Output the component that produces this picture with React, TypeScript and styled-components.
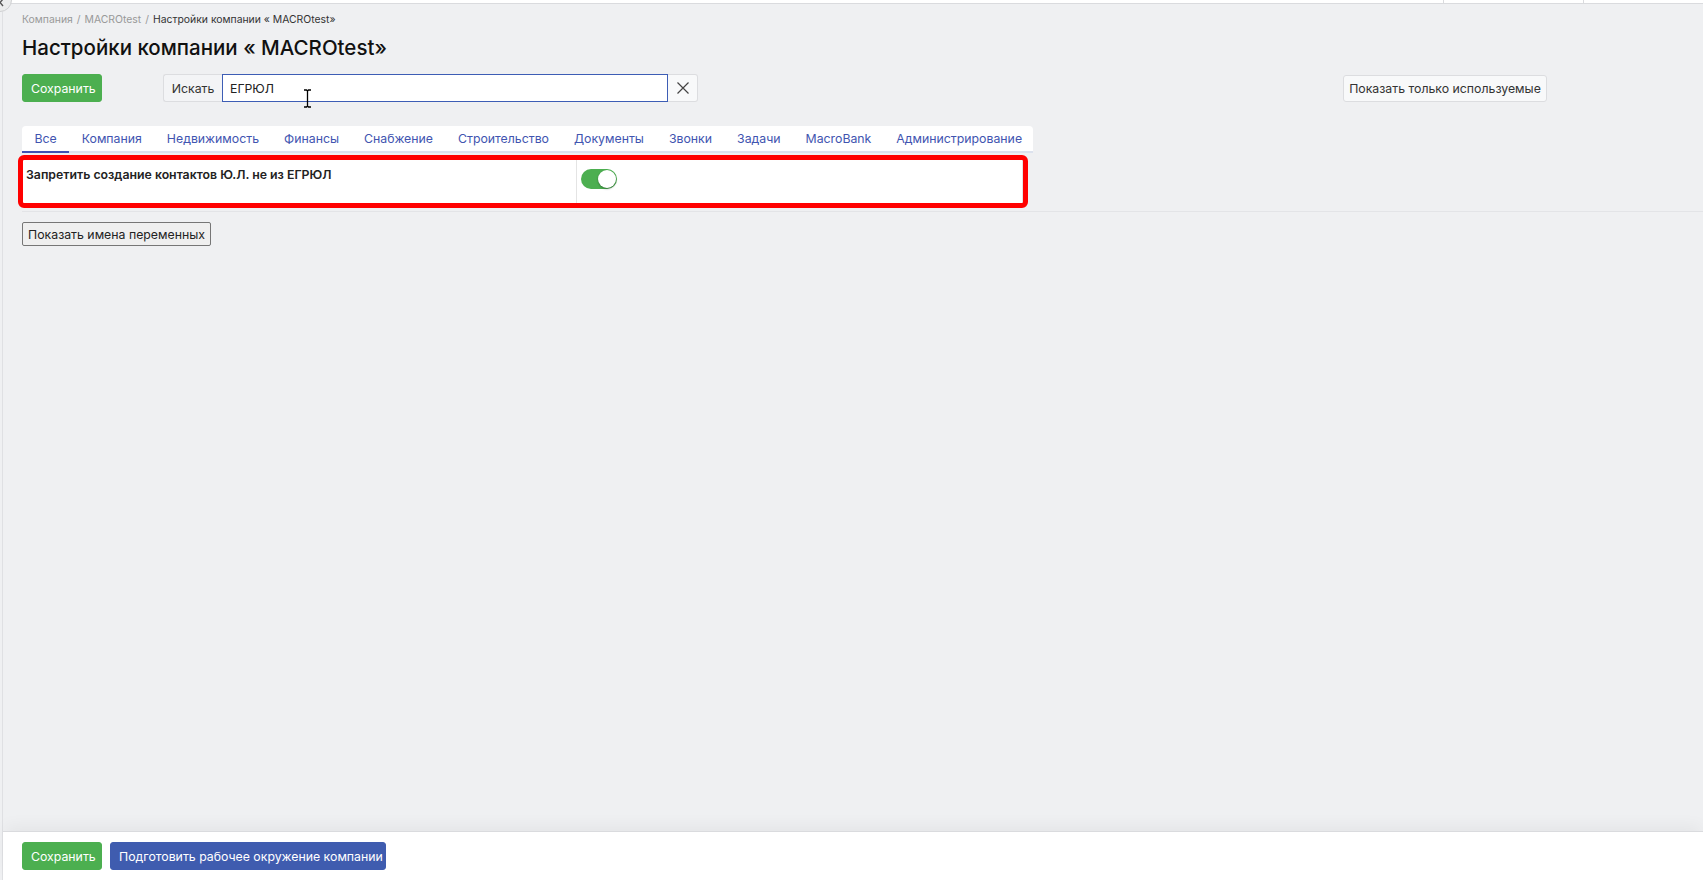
import React from "react";
import styled, { createGlobalStyle } from "styled-components";

const Global = createGlobalStyle`
  html, body { margin: 0; padding: 0; }
  body {
    background: #eff0f2;
    font-family: Inter, "Noto Sans", "Liberation Sans", sans-serif;
    color: #222;
    overflow: hidden;
  }
  * { box-sizing: border-box; }
`;

const Shell = styled.div`
  position: relative;
  height: 880px;
  margin-left: 2px;
  border-left: 1px solid #dfe0e3;
  display: flex;
  flex-direction: column;
`;

const TopStrip = styled.div`
  height: 4px;
  background: #fff;
  border-bottom: 1px solid #dadbde;
  display: flex;
`;

const StripSpacer = styled.div`
  flex: 1;
`;

const StripSegment = styled.div<{ $w: number }>`
  width: ${(p) => p.$w}px;
  border-left: 1px solid #dadbde;
`;

const CollapseKnob = styled.div`
  position: absolute;
  left: -15px;
  top: -12px;
  width: 24px;
  height: 24px;
  border-radius: 50%;
  background: #eceded;
  border: 1px solid #cfd0d2;
  display: flex;
  align-items: flex-end;
  justify-content: flex-end;
  padding: 0 6px 4px 0;
  color: #555;
`;

const Main = styled.main`
  flex: 1;
  padding: 9px 0 0 19px;
  display: flex;
  flex-direction: column;
  align-items: flex-start;
  position: relative;
`;

const Crumbs = styled.nav`
  font-size: 10.4px;
  line-height: 14px;
  color: #999;
  display: flex;
  gap: 4px;
`;

const Crumb = styled.span<{ $current?: boolean }>`
  color: ${(p) => (p.$current ? "#333" : "#999")};
`;

const Title = styled.h1`
  margin: 7px 0 0;
  font-size: 20.5px;
  line-height: 28px;
  font-weight: 500;
  color: #111;
`;

const Toolbar = styled.div`
  margin-top: 12px;
  width: 1525px;
  display: flex;
  align-items: center;
  height: 28px;
`;

const Button = styled.button<{ $variant: "green" | "blue" | "light" }>`
  height: 28px;
  padding: 0 8px;
  border-radius: 3px;
  font-family: inherit;
  font-size: 12.3px;
  white-space: nowrap;
  cursor: pointer;
  border: 1px solid
    ${(p) =>
      p.$variant === "green" ? "#4caf50" : p.$variant === "blue" ? "#3f5caf" : "#dcdde0"};
  background: ${(p) =>
    p.$variant === "green" ? "#4caf50" : p.$variant === "blue" ? "#3f5caf" : "#f8f9fa"};
  color: ${(p) => (p.$variant === "light" ? "#333" : "#fff")};
`;

const SaveButton = styled(Button)`
  width: 80px;
`;

const WideButton = styled(Button)`
  width: 276px;
`;

const SearchGroup = styled.div`
  margin-left: 61px;
  display: flex;
  height: 28px;
`;

const SearchAddon = styled.span`
  width: 59px;
  display: flex;
  align-items: center;
  justify-content: center;
  font-size: 12.3px;
  color: #333;
  background: #f3f4f6;
  border: 1px solid #dcdde0;
  border-right: none;
  border-radius: 3px 0 0 3px;
`;

const SearchInput = styled.input`
  width: 446px;
  height: 28px;
  border: 1px solid #3d5db5;
  padding: 0 7px;
  font-family: inherit;
  font-size: 12.3px;
  color: #222;
  outline: none;
`;

const ClearButton = styled.button`
  width: 30px;
  height: 28px;
  border: 1px solid #dcdde0;
  border-left: none;
  border-radius: 0 3px 3px 0;
  background: #f8f9fa;
  display: flex;
  align-items: center;
  justify-content: center;
  padding: 0;
  color: #444;
`;

const OnlyUsed = styled(Button)`
  margin-left: auto;
  width: 204px;
  height: 27px;
  padding: 0;
  color: #333;
`;

const TextCursor = styled.svg`
  position: absolute;
  left: 300px;
  top: 85px;
`;

const Tabs = styled.div`
  margin-top: 24px;
  width: 1011px;
  height: 27px;
  display: flex;
  background: #fff;
  border-radius: 4px 4px 0 0;
  border-bottom: 2px solid #dce2ee;
`;

const Tab = styled.div<{ $active?: boolean }>`
  padding: 0 12.5px;
  font-size: 12.3px;
  line-height: 25px;
  white-space: nowrap;
  color: #4154b0;
  margin-bottom: -2px;
  border-bottom: 2px solid ${(p) => (p.$active ? "#3f51b5" : "transparent")};
`;

const Settings = styled.section`
  align-self: stretch;
  padding: 7px 0 8px;
  border-bottom: 1px solid #e3e4e7;
`;

const Row = styled.div`
  margin-left: 1px;
  width: 1000px;
  height: 43px;
  display: flex;
  background: #fff;
  border-right: 1px solid #e4e4e4;
  outline: 5px solid #ff0000;
  border-radius: 1px;
`;

const LabelCell = styled.div`
  width: 554px;
  padding: 7px 3px;
  font-size: 12.3px;
  font-weight: 600;
  color: #222;
  border-right: 1px solid #e4e4e4;
`;

const ValueCell = styled.div`
  flex: 1;
  padding: 9px 4px;
`;

const Switch = styled.div<{ $on: boolean }>`
  width: 36px;
  height: 20px;
  border-radius: 10px;
  background: ${(p) => (p.$on ? "#4caf50" : "#ccc")};
  display: flex;
  align-items: center;
  justify-content: ${(p) => (p.$on ? "flex-end" : "flex-start")};
  padding: 0 1px;
`;

const Knob = styled.div`
  width: 18px;
  height: 18px;
  border-radius: 50%;
  background: #fff;
  box-shadow: 0 1px 2px rgba(0, 0, 0, 0.35);
`;

const VarsButton = styled.button`
  margin-top: 10px;
  height: 24px;
  width: 189px;
  padding: 0;
  white-space: nowrap;
  font-family: inherit;
  font-size: 12.3px;
  color: #222;
  background: #efefef;
  border: 1px solid #767676;
  border-radius: 2px;
`;

const Footer = styled.footer`
  height: 49px;
  background: #fff;
  border-top: 1px solid #dadbde;
  box-shadow: 0 -8px 14px -2px rgba(0, 0, 0, 0.045);
  display: flex;
  align-items: center;
  gap: 8px;
  padding: 0 0 0 19px;
`;

const tabs = [
  "Все",
  "Компания",
  "Недвижимость",
  "Финансы",
  "Снабжение",
  "Строительство",
  "Документы",
  "Звонки",
  "Задачи",
  "MacroBank",
  "Администрирование",
];

export default function App() {
  return (
    <>
      <Global />
      <Shell>
        <CollapseKnob>
          <svg width="7" height="9" viewBox="0 0 7 9">
            <path d="M5 1 L2 4.5 L5 8" fill="none" stroke="#555" strokeWidth="1.4" />
          </svg>
        </CollapseKnob>
        <TopStrip>
          <StripSpacer />
          <StripSegment $w={140} />
          <StripSegment $w={120} />
        </TopStrip>
        <Main>
          <Crumbs>
            <Crumb>Компания</Crumb>
            <Crumb>/</Crumb>
            <Crumb>MACROtest</Crumb>
            <Crumb>/</Crumb>
            <Crumb $current>Настройки компании « MACROtest»</Crumb>
          </Crumbs>
          <Title>Настройки компании « MACROtest»</Title>
          <Toolbar>
            <SaveButton $variant="green">Сохранить</SaveButton>
            <SearchGroup>
              <SearchAddon>Искать</SearchAddon>
              <SearchInput defaultValue="ЕГРЮЛ" />
              <ClearButton>
                <svg width="14" height="14" viewBox="0 0 14 14">
                  <path d="M1.5 1.5 L12.5 12.5 M12.5 1.5 L1.5 12.5" stroke="#444" strokeWidth="1.2" />
                </svg>
              </ClearButton>
            </SearchGroup>
            <OnlyUsed $variant="light">Показать только используемые</OnlyUsed>
          </Toolbar>
          <TextCursor width="9" height="19" viewBox="0 0 9 19">
            <path d="M1 1 H3.5 L4.5 2 L5.5 1 H8 M4.5 2 V17 M1 18 H3.5 L4.5 17 L5.5 18 H8" fill="none" stroke="#000" strokeWidth="1.3" />
          </TextCursor>
          <Tabs>
            {tabs.map((t, i) => (
              <Tab key={t} $active={i === 0}>
                {t}
              </Tab>
            ))}
          </Tabs>
          <Settings>
            <Row>
              <LabelCell>Запретить создание контактов Ю.Л. не из ЕГРЮЛ</LabelCell>
              <ValueCell>
                <Switch $on>
                  <Knob />
                </Switch>
              </ValueCell>
            </Row>
          </Settings>
          <VarsButton>Показать имена переменных</VarsButton>
        </Main>
        <Footer>
          <SaveButton $variant="green">Сохранить</SaveButton>
          <WideButton $variant="blue">Подготовить рабочее окружение компании</WideButton>
        </Footer>
      </Shell>
    </>
  );
}
